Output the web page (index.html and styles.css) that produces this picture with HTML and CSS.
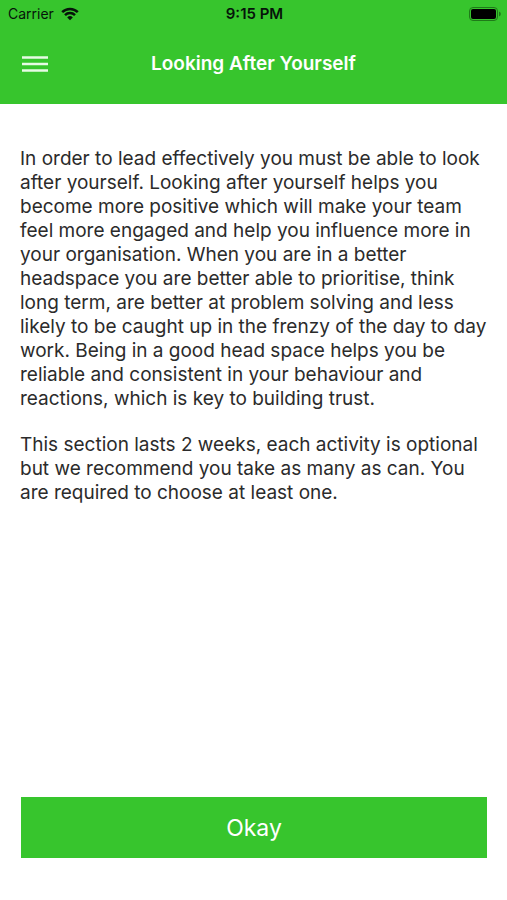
FILE: index.html
```html
<!DOCTYPE html>
<html lang="en">
<head>
  <meta charset="UTF-8" />
  <meta name="viewport" content="width=device-width, initial-scale=1.0"/>
  <title>Looking After Yourself</title>
  <link rel="stylesheet" href="styles.css">
</head>
<body>
  <header class="top">
    <div class="status-bar">
      <div class="carrier">
        <span>Carrier</span>
        <svg class="wifi" width="18" height="14" viewBox="0 0 18 14" aria-hidden="true">
          <path d="M1.2 5.2a11 11 0 0 1 15.6 0M4 8.1a7.1 7.1 0 0 1 10 0" fill="none" stroke="#06140a" stroke-width="2.5"/>
          <path d="M9 13.2L6.2 10.4a4 4 0 0 1 5.6 0z" fill="#06140a"/>
        </svg>
      </div>
      <div class="time">9:15 PM</div>
      <svg class="battery" width="32" height="14" viewBox="0 0 32 14" aria-hidden="true">
        <rect x="0.5" y="0.5" width="28" height="13" rx="3.5" fill="none" stroke="#1f7a19"/>
        <rect x="2" y="2" width="25" height="10" rx="2" fill="#000"/>
        <path d="M30 4.5a2.6 2.6 0 0 1 0 5z" fill="#1f7a19"/>
      </svg>
    </div>

    <div class="nav-bar">
      <button class="menu" type="button" aria-label="Menu">
        <svg width="26" height="18" viewBox="0 0 26 18" aria-hidden="true">
          <path d="M0 2.5h26M0 9h26M0 15.5h26" stroke="#e6fbe4" stroke-width="2.4"/>
        </svg>
      </button>
      <h1>Looking After Yourself</h1>
    </div>
  </header>

  <main>
    <p>In order to lead effectively you must be able to look after yourself. Looking after yourself helps you become more positive which will make your team feel more engaged and help you influence more in your organisation. When you are in a better headspace you are better able to prioritise, think long term, are better at problem solving and less likely to be caught up in the frenzy of the day to day work. Being in a good head space helps you be reliable and consistent in your behaviour and reactions, which is key to building trust.</p>
    <p>This section lasts 2 weeks, each activity is optional but we recommend you take as many as can. You are required to choose at least one.</p>
  </main>

  <footer>
    <button class="okay" type="button">Okay</button>
  </footer>
</body>
</html>
```
FILE: styles.css
```css
* {
  box-sizing: border-box;
}

body {
  margin: 0;
  min-height: 100vh;
  display: flex;
  flex-direction: column;
  font-family: Inter, "Liberation Sans", sans-serif;
  background: #fff;
  color: #2b2b2b;
}

.top {
  background: #37c52d;
}

.status-bar {
  display: grid;
  grid-template-columns: 1fr auto 1fr;
  align-items: center;
  height: 27px;
  padding: 0 6px 0 8px;
  font-size: 14px;
  color: #06140a;
}

.carrier {
  display: flex;
  align-items: center;
  gap: 7px;
}

.time {
  font-size: 15px;
  font-weight: 600;
}

.battery {
  justify-self: end;
}

.nav-bar {
  display: grid;
  grid-template-columns: 26px 1fr 26px;
  align-items: center;
  height: 77px;
  padding: 0 22px 4px;
}

.menu {
  display: flex;
  padding: 0;
  border: none;
  background: none;
  cursor: pointer;
}

h1 {
  margin: 0;
  text-align: center;
  font-size: 19px;
  font-weight: 600;
  color: #fff;
}

main {
  flex: 1;
  padding: 43px 16px 20px 20px;
}

p {
  margin: 0 0 22px;
  font-size: 19px;
  line-height: 24px;
}

footer {
  padding: 0 20px 42px 21px;
}

.okay {
  width: 100%;
  height: 61px;
  border: none;
  background: #37c52d;
  color: #fff;
  font-family: inherit;
  font-size: 23px;
  cursor: pointer;
}
```
